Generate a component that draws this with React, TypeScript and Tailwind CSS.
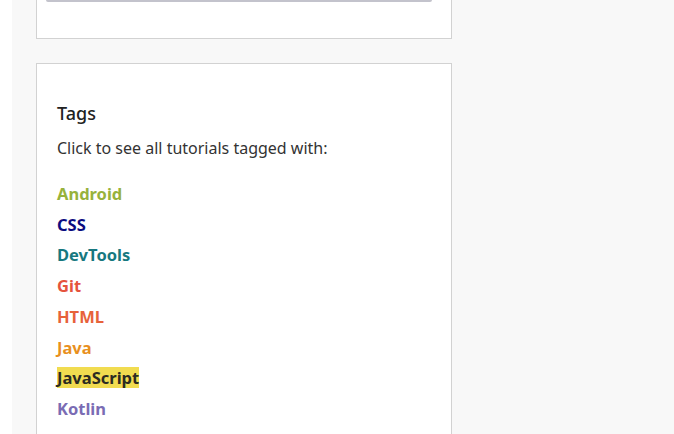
import React from 'react';

const tags = [
  { name: 'Android', className: 'text-[#97b23c]' },
  { name: 'CSS', className: 'text-[#0b0b80]' },
  { name: 'DevTools', className: 'text-[#17787f]' },
  { name: 'Git', className: 'text-[#e5533d]' },
  { name: 'HTML', className: 'text-[#e7623a]' },
  { name: 'Java', className: 'text-[#e8901e]' },
  { name: 'JavaScript', className: 'text-[#2b2b22] bg-[#f1dc50]' },
  { name: 'Kotlin', className: 'text-[#7a6cb4]' },
  { name: 'MySQL', className: 'text-[#e49a1a]' },
];

const App: React.FC = () => {
  return (
    <div className="flex h-[434px] w-[674px] overflow-hidden bg-white" style={{ fontFamily: '"Noto Sans", "Open Sans", sans-serif' }}>
      <div className="w-[12px] shrink-0 bg-white" />
      <div className="flex-1 bg-[#f8f8f8] pl-[24px]">
        <div className="h-[39px] w-[416px] border-x border-b border-[#d2d2d2] bg-white">
          <div className="ml-[9px] h-[2px] w-[386px] rounded-b-full bg-[#c3c3cc]" />
        </div>
        <div className="mt-[24px] w-[416px] border border-[#d2d2d2] bg-white px-[20px] pt-[36px]">
          <h3 className="text-[18px] font-medium leading-[26px] text-[#222]">Tags</h3>
          <p className="mt-[10px] text-[16px] leading-[24px] text-[#333]">Click to see all tutorials tagged with:</p>
          <ul className="mt-[18px] flex flex-col">
            {tags.map((tag) => (
              <li key={tag.name} className="flex h-[30.75px] items-center">
                <a href="#" className={`inline-block text-[16.5px] font-bold leading-[21px] ${tag.className}`}>
                  {tag.name}
                </a>
              </li>
            ))}
          </ul>
        </div>
      </div>
    </div>
  );
};

export default App;
